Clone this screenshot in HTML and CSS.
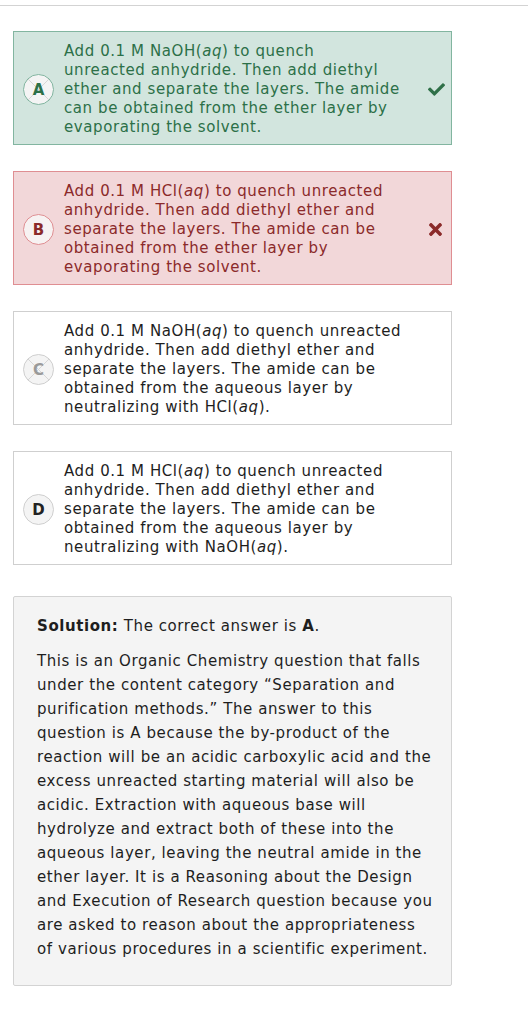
FILE: index.html
```html
<!DOCTYPE html>
<html lang="en">
<head>
<meta charset="utf-8">
<title>Question</title>
<link rel="stylesheet" href="styles.css">
</head>
<body>
<div class="topline"></div>
<main class="wrap">
  <div class="option correct">
    <span class="badge crossed">A</span>
    <p class="text">Add 0.1 M NaOH(<i>aq</i>) to quench unreacted anhydride. Then add diethyl ether and separate the layers. The amide can be obtained from the ether layer by evaporating the solvent.</p>
    <svg class="mark" viewBox="0 64 512 384" width="17" height="13" aria-hidden="true"><path fill="#2f7048" d="M173.898 439.404l-166.4-166.4c-9.997-9.997-9.997-26.206 0-36.204l36.203-36.204c9.997-9.998 26.207-9.998 36.204 0L192 312.69 432.095 72.596c9.997-9.997 26.207-9.997 36.204 0l36.203 36.204c9.997 9.997 9.997 26.206 0 36.204l-294.4 294.401c-9.998 9.997-26.207 9.997-36.204-.001z"/></svg>
  </div>
  <div class="option wrong">
    <span class="badge">B</span>
    <p class="text">Add 0.1 M HCl(<i>aq</i>) to quench unreacted anhydride. Then add diethyl ether and separate the layers. The amide can be obtained from the ether layer by evaporating the solvent.</p>
    <svg class="mark x" viewBox="0 80 352 352" width="13" height="13" aria-hidden="true"><path fill="#8b2a2a" d="M242.72 256l100.07-100.07c12.28-12.280 12.28-32.19 0-44.48l-22.24-22.24c-12.28-12.28-32.19-12.28-44.48 0L176 189.28 75.93 89.21c-12.28-12.28-32.19-12.28-44.48 0L9.21 111.45c-12.28 12.28-12.28 32.19 0 44.48L109.28 256 9.21 356.070c-12.28 12.28-12.28 32.19 0 44.48l22.24 22.24c12.28 12.28 32.2 12.28 44.480 0L176 322.72l100.07 100.07c12.28 12.28 32.2 12.28 44.48 0l22.24-22.24c12.28-12.28 12.28-32.19 0-44.48L242.72 256z"/></svg>
  </div>
  <div class="option">
    <span class="badge crossed muted">C</span>
    <p class="text">Add 0.1 M NaOH(<i>aq</i>) to quench unreacted anhydride. Then add diethyl ether and separate the layers. The amide can be obtained from the aqueous layer by neutralizing with HCl(<i>aq</i>).</p>
  </div>
  <div class="option">
    <span class="badge">D</span>
    <p class="text">Add 0.1 M HCl(<i>aq</i>) to quench unreacted anhydride. Then add diethyl ether and separate the layers. The amide can be obtained from the aqueous layer by neutralizing with NaOH(<i>aq</i>).</p>
  </div>
  <section class="solution">
    <p class="answer"><b>Solution:</b> The correct answer is <b>A</b>.</p>
    <p>This is an Organic Chemistry question that falls under the content category “Separation and purification methods.” The answer to this question is A because the by-product of the reaction will be an acidic carboxylic acid and the excess unreacted starting material will also be acidic. Extraction with aqueous base will hydrolyze and extract both of these into the aqueous layer, leaving the neutral amide in the ether layer. It is a Reasoning about the Design and Execution of Research question because you are asked to reason about the appropriateness of various procedures in a scientific experiment.</p>
  </section>
</main>
</body>
</html>
```
FILE: styles.css
```css
html, body {
  margin: 0;
  padding: 0;
  background: #fff;
}
body {
  font-family: "DejaVu Sans", Verdana, sans-serif;
  font-size: 15px;
  letter-spacing: 0.58px;
  color: #222;
}
.topline {
  height: 5px;
  border-bottom: 1px solid #d3d3d3;
}
.wrap {
  width: 439px;
  margin-left: 13px;
  padding-top: 25px;
}
.option {
  display: flex;
  align-items: center;
  box-sizing: border-box;
  height: 114px;
  border: 1px solid #cfcfcf;
  background: #fff;
  padding: 3px 38px 0 9px;
  margin-bottom: 26px;
  color: #1e1e1e;
}
.option.correct {
  background: #d2e5de;
  border-color: #82b5a0;
  color: #2c7048;
  padding-right: 6px;
}
.option.wrong {
  background: #f2d7d9;
  border-color: #df8e92;
  color: #8b2a2a;
  padding-right: 6px;
}
.badge {
  flex: none;
  box-sizing: border-box;
  width: 31px;
  height: 31px;
  border-radius: 50%;
  border: 1px solid #cfcfcf;
  background: #f4f4f4;
  display: flex;
  align-items: center;
  justify-content: center;
  font-weight: bold;
  font-size: 15px;
  letter-spacing: 0;
  color: #222;
  margin-right: 10px;
}
.badge.crossed {
  background:
    linear-gradient(45deg, transparent calc(50% - 0.7px), #d6d6d6 50%, transparent calc(50% + 0.7px)),
    linear-gradient(-45deg, transparent calc(50% - 0.7px), #d6d6d6 50%, transparent calc(50% + 0.7px)),
    #f4f4f4;
}
.correct .badge {
  border-color: #82b5a0;
  color: #2c7048;
}
.wrong .badge {
  border-color: #df8e92;
  background: #f7f2f2;
  color: #8b2a2a;
}
.badge.muted {
  color: #9a9a9a;
}
.text {
  flex: 1;
  margin: 0;
  line-height: 19px;
}
.correct .text, .wrong .text {
  margin-right: 28px;
}
.mark {
  flex: none;
  display: block;
}
.mark.x {
  margin-right: 3px;
}
.option:nth-of-type(4) {
  margin-bottom: 31px;
}
.solution {
  box-sizing: border-box;
  height: 390px;
  border: 1px solid #d3d3d3;
  border-radius: 2px;
  background: #f4f4f4;
  padding: 17px 16px 0 23px;
  line-height: 24px;
  color: #1e1e1e;
}
.solution p {
  margin: 0;
}
.solution .answer {
  margin-bottom: 11px;
}
```
